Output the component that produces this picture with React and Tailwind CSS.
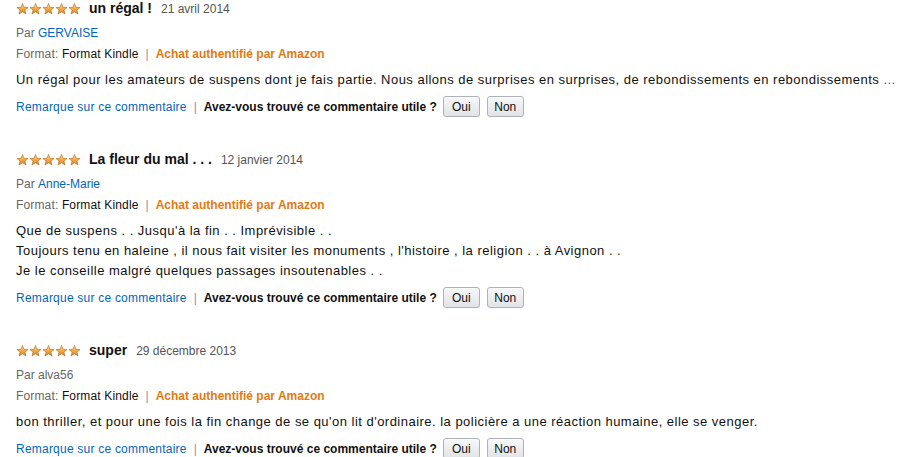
import React from "react";

const reviews = [
  {
    title: "un régal !",
    date: "21 avril 2014",
    author: "GERVAISE",
    body: [
      "Un régal pour les amateurs de suspens dont je fais partie. Nous allons de surprises en surprises, de rebondissements en rebondissements ",
    ],
    more: true,
  },
  {
    title: "La fleur du mal . . .",
    date: "12 janvier 2014",
    author: "Anne-Marie",
    body: [
      "Que de suspens . . Jusqu'à la fin . . Imprévisible . .",
      "Toujours tenu en haleine , il nous fait visiter les monuments , l'histoire , la religion . . à Avignon . .",
      "Je le conseille malgré quelques passages insoutenables . .",
    ],
  },
  {
    title: "super",
    date: "29 décembre 2013",
    author: "alva56",
    authorGray: true,
    body: [
      "bon thriller, et pour une fois la fin change de se qu'on lit d'ordinaire. la policière a une réaction humaine, elle se venger.",
    ],
  },
];

function Star({ id }) {
  return (
    <svg width="13" height="12" viewBox="0 0 24 23">
      <defs>
        <linearGradient id={id} x1="0" y1="0" x2="0" y2="1">
          <stop offset="0" stopColor="#fde6a2" />
          <stop offset="0.5" stopColor="#f3a847" />
          <stop offset="1" stopColor="#d9822b" />
        </linearGradient>
      </defs>
      <path
        d="M12 1 L14.9 8.3 L22.7 8.6 L16.6 13.5 L18.7 21.1 L12 16.7 L5.3 21.1 L7.4 13.5 L1.3 8.6 L9.1 8.3 Z"
        fill={`url(#${id})`}
        stroke="#b06a1c"
        strokeWidth="1.2"
        strokeLinejoin="round"
      />
    </svg>
  );
}

function Stars({ k }) {
  return (
    <div className="flex">
      {[0, 1, 2, 3, 4].map((i) => (
        <Star key={i} id={`g${k}${i}`} />
      ))}
    </div>
  );
}

function Btn({ children }) {
  return (
    <button className="h-[21px] w-[37px] rounded-[3px] border border-[#adb1b8] bg-gradient-to-b from-[#f7f8fa] to-[#e2e3e6] text-[12px] leading-none text-[#111] shadow-[0_1px_0_rgba(255,255,255,0.6)_inset]">
      {children}
    </button>
  );
}

function Review({ r, k }) {
  return (
    <div className="flex flex-col">
      <div className="flex items-center h-[17px]">
        <Stars k={k} />
        <span className="ml-[8px] text-[14px] font-bold text-[#111]">{r.title}</span>
        <span className="ml-[9px] text-[12px] text-[#555]">{r.date}</span>
      </div>
      <div className="mt-[8px] h-[16px] flex items-center text-[12px] text-[#666]">
        Par&nbsp;
        <span className={r.authorGray ? "text-[#666]" : "text-[#0066c0]"}>{r.author}</span>
      </div>
      <div className="mt-[5px] h-[16px] flex items-center text-[12px] text-[#666] whitespace-nowrap">
        <span className="tracking-[0.15px]">
          Format: <span className="text-[#111]">Format Kindle</span>
        </span>
        <span className="mx-[7px] text-[#9a8aa8]">|</span>
        <span className="font-bold text-[#e47911]">Achat authentifié par Amazon</span>
      </div>
      <div className="mt-[8px] text-[13px] leading-[20px] tracking-[0.48px] text-[#111]">
        {r.body.map((line, i) => (
          <div key={i} className="whitespace-nowrap">
            {line}
            {r.more && <span className="text-[#0066c0]">...</span>}
          </div>
        ))}
      </div>
      <div className="mt-[6px] flex items-center h-[21px] text-[12px] whitespace-nowrap">
        <span className="text-[#0066c0] tracking-[0.22px]">Remarque sur ce commentaire</span>
        <span className="mx-[7px] text-[#9a8aa8]">|</span>
        <span className="font-bold text-[#111]">Avez-vous trouvé ce commentaire utile ?</span>
        <div className="ml-[6px] flex gap-[7px]">
          <Btn>Oui</Btn>
          <Btn>Non</Btn>
        </div>
      </div>
    </div>
  );
}

export default function App() {
  return (
    <div
      className="w-[915px] h-[457px] overflow-hidden bg-white pl-[16px] flex flex-col gap-[34px]"
      style={{ fontFamily: '"Liberation Sans", Arial, sans-serif' }}
    >
      {reviews.map((r, i) => (
        <Review key={i} r={r} k={i} />
      ))}
    </div>
  );
}
